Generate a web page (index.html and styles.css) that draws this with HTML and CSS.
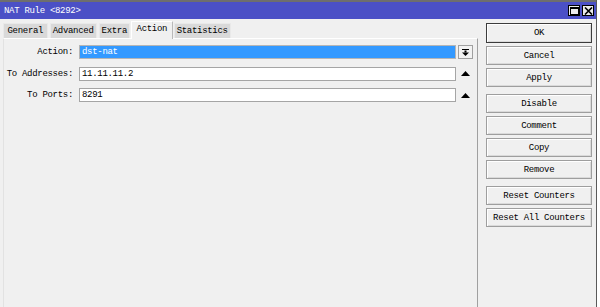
FILE: index.html
```html
<!DOCTYPE html>
<html lang="en">
<head>
  <meta charset="UTF-8" />
  <title>NAT Rule &lt;8292&gt;</title>
  <link rel="stylesheet" href="styles.css">
</head>
<body>
  <div class="window">
    <div class="top-strip"></div>
    <div class="titlebar">
      <span class="title">NAT Rule &lt;8292&gt;</span>
      <div class="win-btns">
        <span class="win-btn">
          <svg width="9" height="8" viewBox="0 0 9 8"><rect x="0.5" y="0.5" width="8" height="7" fill="none" stroke="#000"/><rect x="0" y="0" width="9" height="2" fill="#000"/></svg>
        </span>
        <span class="win-btn">
          <svg width="9" height="8" viewBox="0 0 9 8"><path d="M1 0.5l7 7M8 0.5l-7 7" stroke="#000" stroke-width="1.6"/></svg>
        </span>
      </div>
    </div>

    <div class="body">
      <div class="main">
        <div class="tabs">
          <div class="tab first">General</div>
          <div class="tab">Advanced</div>
          <div class="tab">Extra</div>
          <div class="tab active">Action</div>
          <div class="tab">Statistics</div>
        </div>
        <div class="panel">
          <div class="row">
            <label class="lbl">Action:</label>
            <div class="field selected">dst-nat</div>
            <span class="drop">
              <svg width="7" height="7" viewBox="0 0 7 7"><rect x="0" y="0" width="7" height="1" fill="#000"/><rect x="2.5" y="1.5" width="2" height="2" fill="#000"/><path d="M0 3.5h7L3.5 7z" fill="#000"/></svg>
            </span>
          </div>
          <div class="row">
            <label class="lbl">To Addresses:</label>
            <div class="field">11.11.11.2</div>
            <span class="arrow">
              <svg width="9" height="5" viewBox="0 0 9 5"><path d="M0 5L4.5 0L9 5z" fill="#000"/></svg>
            </span>
          </div>
          <div class="row">
            <label class="lbl">To Ports:</label>
            <div class="field">8291</div>
            <span class="arrow">
              <svg width="9" height="5" viewBox="0 0 9 5"><path d="M0 5L4.5 0L9 5z" fill="#000"/></svg>
            </span>
          </div>
        </div>
      </div>

      <div class="side">
        <button class="btn default">OK</button>
        <button class="btn">Cancel</button>
        <button class="btn">Apply</button>
        <button class="btn group">Disable</button>
        <button class="btn">Comment</button>
        <button class="btn">Copy</button>
        <button class="btn">Remove</button>
        <button class="btn group">Reset Counters</button>
        <button class="btn">Reset All Counters</button>
      </div>
    </div>
  </div>
</body>
</html>
```

FILE: styles.css
```css
body {
  margin: 0;
  background: #ffffff;
  font-family: 'Liberation Mono', monospace;
  font-size: 9px;
  letter-spacing: -0.3px;
  color: #000;
}
.window {
  width: 596px;
  height: 307px;
  display: flex;
  flex-direction: column;
  background: #f0f0f0;
  border-right: 1px solid #5a5a5a;
}
.top-strip {
  height: 2px;
  background: #6e6e6e;
}
.titlebar {
  height: 17px;
  background: #4b50c6;
  display: flex;
  align-items: center;
  justify-content: space-between;
  padding: 0 2px 0 4px;
}
.title {
  color: #fff;
}
.win-btns {
  display: flex;
  gap: 2px;
}
.win-btn {
  width: 10px;
  height: 9px;
  background: #ececec;
  border: 1px solid #000;
  display: flex;
  align-items: center;
  justify-content: center;
}
.body {
  flex: 1;
  display: flex;
}
.main {
  width: 475px;
  margin-left: 3px;
  display: flex;
  flex-direction: column;
}
.tabs {
  height: 17px;
  margin-top: 2px;
  display: flex;
  align-items: flex-end;
  gap: 2px;
  position: relative;
  z-index: 1;
}
.tab {
  height: 14px;
  line-height: 14px;
  padding: 0 2px;
  background: #d9d9d9;
  border: 1px solid #e9e9e9;
  border-bottom: none;
}
.tab.first {
  padding: 0 3.5px;
}
.tab.active {
  height: 17px;
  line-height: 15px;
  background: #f0f0f0;
  border-color: #ffffff #b9b9b9 #f0f0f0 #ffffff;
  padding: 0 4.5px;
  margin: 0 -1px -1px;
}
.panel {
  flex: 1;
  border-top: 1px solid #ffffff;
  border-left: 1px solid #e2e2e2;
  border-right: 1px solid #a0a0a0;
  padding-top: 6px;
}
.row {
  display: flex;
  align-items: center;
  height: 14px;
  margin-bottom: 7.5px;
}
.lbl {
  width: 69px;
  text-align: right;
}
.field {
  width: 373px;
  height: 12px;
  line-height: 12px;
  margin-left: 6px;
  padding-left: 2px;
  background: #fff;
  border: 1px solid #a5a5a5;
  box-sizing: content-box;
}
.field.selected {
  background: #3399ff;
  color: #fff;
  border-color: #b5b5b5;
}
.drop {
  width: 13px;
  height: 12px;
  margin-left: 2px;
  background: #f2f2f2;
  border: 1px solid #a0a0a0;
  display: flex;
  align-items: center;
  justify-content: center;
}
.arrow {
  width: 15px;
  margin-left: 2px;
  display: flex;
  justify-content: center;
}
.side {
  display: flex;
  flex-direction: column;
  padding: 5px 0 0 8px;
}
.btn {
  width: 106px;
  height: 19px;
  margin-bottom: 3px;
  padding: 0;
  font-family: inherit;
  font-size: 9px;
  letter-spacing: -0.3px;
  color: #000;
  background: #f0f0f0;
  border: 1px solid #9e9e9e;
  box-shadow: inset 1px 1px 0 #ffffff, inset -1px -1px 0 #dadada;
}
.btn.default {
  height: 20px;
  margin-top: -1px;
  border-color: #3c3c3c;
}
.btn.group {
  margin-top: 4px;
}
```
